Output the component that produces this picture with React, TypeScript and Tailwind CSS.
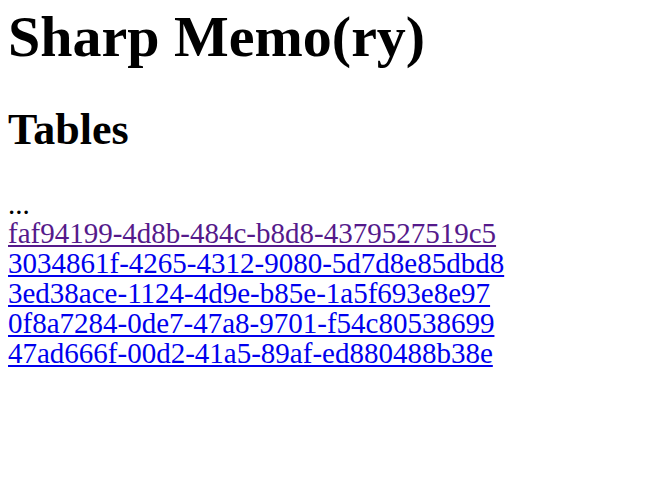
const tables = [
  { id: "faf94199-4d8b-484c-b8d8-4379527519c5", visited: true },
  { id: "3034861f-4265-4312-9080-5d7d8e85dbd8", visited: false },
  { id: "3ed38ace-1124-4d9e-b85e-1a5f693e8e97", visited: false },
  { id: "0f8a7284-0de7-47a8-9701-f54c80538699", visited: false },
  { id: "47ad666f-00d2-41a5-89af-ed880488b38e", visited: false },
];

export default function App() {
  return (
    <div className="min-h-screen bg-white px-[8px] pt-[8px] text-black font-['Liberation_Serif','Times_New_Roman',serif]">
      <h1 className="text-[58px] font-bold leading-[58px]">Sharp Memo(ry)</h1>
      <h2 className="mt-[42px] text-[44px] font-bold leading-[44px]">Tables</h2>
      <p className="mt-[38px] text-[29px] leading-[28px]">...</p>
      <div className="flex flex-col items-start text-[29px] leading-[30px]">
        {tables.map((t) => (
          <a
            key={t.id}
            href="#"
            className={`underline ${t.visited ? "text-[#551a8b]" : "text-[#0000ee]"}`}
          >
            {t.id}
          </a>
        ))}
      </div>
    </div>
  );
}
